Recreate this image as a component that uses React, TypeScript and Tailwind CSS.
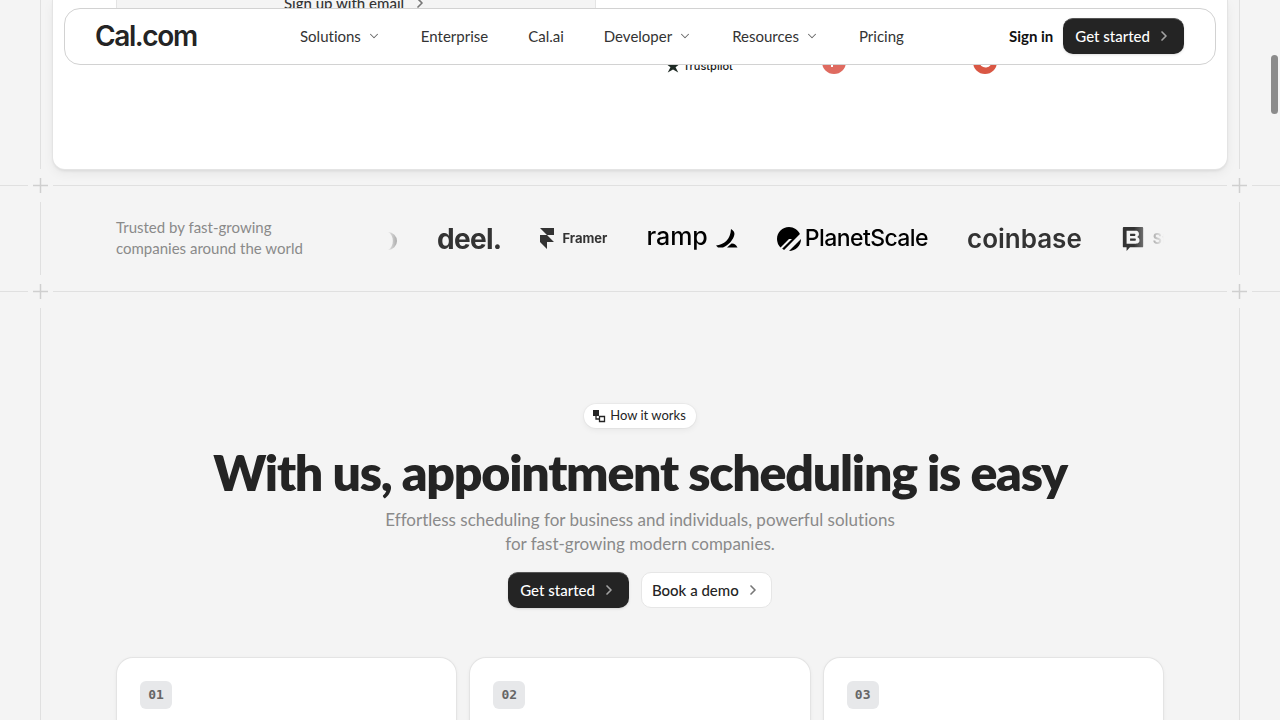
import { ChevronDown, ChevronRight } from 'lucide-react';
import { SiFramer, SiPlanetscale, SiStoryblok } from 'react-icons/si';
import type { ReactNode } from 'react';

const NAV_ITEMS = [
  { label: 'Solutions', menu: true },
  { label: 'Enterprise', menu: false },
  { label: 'Cal.ai', menu: false },
  { label: 'Developer', menu: true },
  { label: 'Resources', menu: true },
  { label: 'Pricing', menu: false },
];

const STEPS = ['01', '02', '03'];

function DarkButton({ children }: { children: ReactNode }) {
  return (
    <button className="flex h-9 items-center gap-1.5 rounded-[10px] border-t border-[#555] bg-[#242424] px-3 pb-px text-[15px] font-medium whitespace-nowrap text-white shadow-sm">
      {children}
      <ChevronRight className="h-4 w-4 text-[#a3a3a3]" strokeWidth={2.5} />
    </button>
  );
}

function Header() {
  return (
    <header className="absolute inset-x-16 top-2 z-10 flex h-[57px] items-center rounded-2xl border border-[#d2d2d2] bg-white pr-[31px] pb-px pl-[30px]">
      <a href="#" className="w-[205px] font-['Inter',sans-serif] text-[28px] font-semibold tracking-tighter text-[#242424]">
        Cal.com
      </a>
      <nav className="flex gap-10 text-[15px] text-[#333]">
        {NAV_ITEMS.map(item => (
          <a key={item.label} href="#" className="flex items-center gap-1.5">
            {item.label}
            {item.menu && <ChevronDown className="h-3.5 w-3.5 text-[#666]" strokeWidth={1.75} />}
          </a>
        ))}
      </nav>
      <div className="ml-auto flex items-center gap-2.5">
        <a href="#" className="text-[15px] font-bold text-[#111]">Sign in</a>
        <DarkButton>Get started</DarkButton>
      </div>
    </header>
  );
}

function Hero() {
  return (
    <section className="mx-10 flex h-[169px] shrink-0 border-x border-[#e0e0e0] px-3">
      <div className="flex flex-1 items-start rounded-b-xl bg-white px-[63px] shadow-[0_0_0_1px_#e4e4e4,0_2px_3px_rgba(0,0,0,0.08),0_4px_12px_rgba(0,0,0,0.06)]">
        <div className="-mt-[7px] flex h-12 w-[480px] justify-center border-x border-[#e4e4e4] bg-[#f4f4f4]">
          <a href="#" className="flex h-5 items-center gap-2 text-[15px] font-medium text-[#333]">
            Sign up with email
            <ChevronRight className="h-4 w-4 text-[#777]" strokeWidth={2.5} />
          </a>
        </div>
        <div className="ml-[70px] flex items-center pt-[50px]">
          <span className="flex w-[156px] items-center gap-[3px] pt-2 font-['Inter',sans-serif] text-[11px] font-medium text-[#191919]">
            <svg viewBox="0 0 24 24" className="h-3.5 w-3.5" fill="#1f2b25">
              <path d="M12 1l2.900 8H23l-6.600 5.200L21 23l-9-5-9 5 4.600-8.800L1 9h8.100z" />
            </svg>
            Trustpilot
          </span>
          <svg viewBox="0 0 24 24" className="mr-[127px] h-6 w-6">
            <circle cx="12" cy="12" r="12" fill="#df6b60" />
            <path d="M10 17V7h3.500a3 3 0 0 1 0 6H10" fill="none" stroke="#fff" strokeWidth="2" />
          </svg>
          <svg viewBox="0 0 24 24" className="h-6 w-6">
            <circle cx="12" cy="12" r="12" fill="#d95744" />
            <path d="M16 7.500a5 5 0 1 0 .5 6.500" fill="none" stroke="#fff" strokeWidth="3" />
          </svg>
        </div>
      </div>
    </section>
  );
}

function Cross() {
  return (
    <svg viewBox="0 0 15 15" className="h-[15px] w-[15px] shrink-0" stroke="#cfcfcf" strokeWidth="1.500">
      <path d="M0 7.500h15M7.500 0v15" />
    </svg>
  );
}

// horizontal rule that is broken around the crosses of the side lines
function Divider() {
  return (
    <div className="flex h-[33px] shrink-0 items-center gap-[5px]">
      <div className="h-px w-7 bg-[#e0e0e0]" />
      <Cross />
      <div className="h-px flex-1 bg-[#e0e0e0]" />
      <Cross />
      <div className="h-px w-7 bg-[#e0e0e0]" />
    </div>
  );
}

function FramerLogo() {
  return (
    <span className="flex items-center gap-1 text-[13px] font-bold text-[#333]">
      <SiFramer className="-ml-1 h-[21px] w-[22px]" />
      Framer
    </span>
  );
}

function RampLogo() {
  return (
    <span className="flex items-center gap-2 text-[25px] font-medium text-black">
      <span className="-mt-1">ramp</span>
      <svg viewBox="0 0 22 19" className="h-[19px] w-[22px]" fill="#000">
        <path d="M15 0c2.500 1.500 3.800 3.200 3.400 5.500-.9 5.500-6 10.500-11.400 13H2L0 16.600c8-1 14.500-6 15-16.600zM15.500 14.500c2.500-.3 4.500 1.200 6 4H11z" />
      </svg>
    </span>
  );
}

function PlanetScaleLogo() {
  return (
    <span className="flex items-center gap-1 text-[23px] font-medium tracking-tight text-black">
      <SiPlanetscale className="h-6 w-6" />
      PlanetScale
    </span>
  );
}

function StoryblokLogo() {
  return (
    <span className="flex items-center gap-2 text-sm font-bold text-[#333]">
      <SiStoryblok className="h-6 w-6" />
      Storyblok
    </span>
  );
}

function TrustedBy() {
  return (
    <section className="mx-10 flex h-[73px] shrink-0 items-center border-x border-[#e0e0e0] px-[75px]">
      <p className="w-[270px] shrink-0 pb-0.5 text-[15px] leading-[21px] text-[#8a8a8a]">
        Trusted by fast-growing
        <br />
        companies around the world
      </p>
      <div className="flex h-10 min-w-0 flex-1 items-center gap-[39px] overflow-hidden mask-[linear-gradient(to_right,transparent,#000_30px,#000_calc(100%-30px),transparent)] font-['Inter',sans-serif] *:shrink-0">
        <svg viewBox="0 0 12 18" className="mt-1 h-[18px] w-[12px]" fill="#333">
          <path d="M2 0a9 9 0 0 1 0 18c6.500-3 6.500-15 0-18z" />
        </svg>
        <span className="text-[28px] font-bold tracking-tight text-[#333]">deel.</span>
        <FramerLogo />
        <RampLogo />
        <PlanetScaleLogo />
        <span className="text-[26px] font-semibold text-[#333]">coinbase</span>
        <StoryblokLogo />
      </div>
    </section>
  );
}

function HowItWorks() {
  return (
    <section className="mx-10 flex flex-1 flex-col items-center border-x border-[#e0e0e0] px-[76px] pt-24">
      <div className="flex h-6 items-center gap-1 rounded-full bg-white px-2 pr-2.5 text-[13px] text-[#242424] shadow-[0_0_0_1px_rgba(0,0,0,0.03),0_2px_6px_rgba(0,0,0,0.06)]">
        <svg viewBox="0 0 14 14" className="h-3.5 w-3.5">
          <path d="M1 1h6v6H1z" fill="#242424" />
          <path d="M4 7v3h4M7.500 7.500h5v5h-5z" fill="none" stroke="#242424" strokeWidth="1.300" />
        </svg>
        How it works
      </div>
      <h2 className="mt-4 text-[50px] leading-14 font-extrabold tracking-tight whitespace-nowrap text-[#242424]">
        With us, appointment scheduling is easy
      </h2>
      <p className="mt-2 text-center text-[17px] leading-6 text-[#8a8a8a]">
        Effortless scheduling for business and individuals, powerful solutions
        <br />
        for fast-growing modern companies.
      </p>
      <div className="mt-4 flex gap-3">
        <DarkButton>Get started</DarkButton>
        <button className="flex h-9 items-center gap-1.5 rounded-[10px] border border-[#e6e6e6] bg-white px-2.5 text-[15px] font-medium text-[#242424]">
          Book a demo
          <ChevronRight className="h-4 w-4 text-[#777]" strokeWidth={2.5} />
        </button>
      </div>
      <div className="mt-[50px] grid w-full grid-cols-3 gap-3.5">
        {STEPS.map(step => (
          <article key={step} className="h-40 rounded-2xl bg-white px-[23px] pt-[23px] shadow-[0_0_0_1px_#e4e4e4,0_1px_4px_rgba(0,0,0,0.08)]">
            <span className="flex h-7 w-8 items-center justify-center rounded-md bg-[#e7e8ea] font-['DejaVu_Sans_Mono',monospace] text-[13px] font-bold text-[#666]">
              {step}
            </span>
          </article>
        ))}
      </div>
    </section>
  );
}

export default function App() {
  return (
    <div className="relative flex h-screen flex-col overflow-hidden bg-[#f4f4f4] font-['Lato',sans-serif] [font-variant-ligatures:none]">
      <Header />
      <Hero />
      <Divider />
      <TrustedBy />
      <Divider />
      <HowItWorks />
      <div className="absolute top-[55px] right-0.5 h-[59px] w-[7px] rounded-full bg-[#8b8b8b]" />
    </div>
  );
}
